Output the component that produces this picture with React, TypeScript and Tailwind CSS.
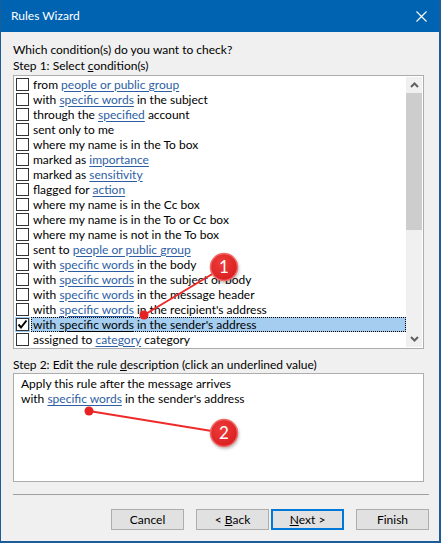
import React from "react"

type Part = [string, boolean]

const conditions: Part[][] = [
  [["from ", false], ["people or public group", true]],
  [["with ", false], ["specific words", true], [" in the subject", false]],
  [["through the ", false], ["specified", true], [" account", false]],
  [["sent only to me", false]],
  [["where my name is in the To box", false]],
  [["marked as ", false], ["importance", true]],
  [["marked as ", false], ["sensitivity", true]],
  [["flagged for ", false], ["action", true]],
  [["where my name is in the Cc box", false]],
  [["where my name is in the To or Cc box", false]],
  [["where my name is not in the To box", false]],
  [["sent to ", false], ["people or public group", true]],
  [["with ", false], ["specific words", true], [" in the body", false]],
  [["with ", false], ["specific words", true], [" in the subject or body", false]],
  [["with ", false], ["specific words", true], [" in the message header", false]],
  [["with ", false], ["specific words", true], [" in the recipient's address", false]],
  [["with ", false], ["specific words", true], [" in the sender's address", false]],
  [["assigned to ", false], ["category", true], [" category", false]],
]

const SELECTED = 16

function Checkbox({ checked }: { checked: boolean }) {
  return (
    <span
      className={
        "w-[13px] h-[13px] shrink-0 bg-white border border-[#333] flex items-center justify-center " +
        (checked ? "outline outline-1 outline-[#9cc7ee]" : "")
      }
    >
      {checked && (
        <svg width="11" height="11" viewBox="0 0 11 11">
          <polyline points="1.5,5.5 4,8.5 9.5,1.5" fill="none" stroke="#000" strokeWidth="2" />
        </svg>
      )}
    </span>
  )
}

function Row({ parts, selected }: { parts: Part[]; selected: boolean }) {
  return (
    <div className="h-[15px] flex items-center pl-[2px]">
      <Checkbox checked={selected} />
      <span
        className={
          "ml-[2px] pl-[2px] h-[15px] flex-1 flex items-center whitespace-pre " +
          (selected ? "bg-[#a5cdf0] outline outline-1 outline-dotted outline-black -outline-offset-1" : "")
        }
      >
        {parts.map(([text, link], i) =>
          link ? (
            <span key={i} className={"underline underline-offset-2 " + (selected ? "text-black" : "text-[#2d5ea3]")}>
              {text}
            </span>
          ) : (
            <span key={i}>{text}</span>
          )
        )}
      </span>
    </div>
  )
}

function Chevron({ up }: { up: boolean }) {
  return (
    <svg width="9" height="6" viewBox="0 0 9 6">
      <polyline
        points={up ? "1,5 4.5,1.5 8,5" : "1,1 4.5,4.5 8,1"}
        fill="none"
        stroke="#606060"
        strokeWidth="2"
      />
    </svg>
  )
}

function Button({ children, primary }: { children: React.ReactNode; primary?: boolean }) {
  return (
    <button
      className={
        "w-[73px] h-[21px] bg-[#e1e1e1] text-[12px] text-black flex items-center justify-center " +
        (primary ? "border-2 border-[#0078d7]" : "border border-[#adadad]")
      }
    >
      {children}
    </button>
  )
}

function Marker({ cx, cy, n }: { cx: number; cy: number; n: string }) {
  return (
    <g>
      <circle cx={cx + 1} cy={cy + 2} r="14" fill="rgba(0,0,0,0.25)" filter="url(#blur)" />
      <circle cx={cx} cy={cy} r="13.5" fill="url(#redFill)" stroke="#f26a6a" strokeWidth="1.5" />
      <text
        x={cx}
        y={cy + 6}
        textAnchor="middle"
        fontSize="17"
        fill="#fff"
        fontFamily="Lato, 'Liberation Sans', sans-serif"
      >
        {n}
      </text>
    </g>
  )
}

export default function App() {
  return (
    <div
      className="relative w-[441px] h-[543px] bg-[#f0f0f0] text-[12px] text-black flex flex-col border-l border-r-2 border-b-2 border-[#1c5c98] overflow-hidden"
      style={{ fontFamily: "Lato, 'Noto Sans', sans-serif" }}
    >
      {/* title bar */}
      <div className="h-[32px] -mx-[1px] bg-[#0063b1] flex items-center justify-between pl-[11px] pr-[13px] shrink-0">
        <span className="text-white text-[12px]">Rules Wizard</span>
        <svg width="11" height="11" viewBox="0 0 11 11">
          <path d="M0.5 0.5 L10.5 10.5 M10.5 0.5 L0.5 10.5" stroke="#fff" strokeWidth="1.1" />
        </svg>
      </div>

      <div className="flex flex-col px-[12px] pr-[15px]">
        <div className="mt-[10px] leading-[16px]">Which condition(s) do you want to check?</div>
        <div className="leading-[16px]">
          Step 1: Select <span className="underline">c</span>ondition(s)
        </div>

        {/* condition list */}
        <div className="mt-[1px] h-[274px] bg-white border border-[#adadad] flex">
          <div className="flex-1 py-[1px]">
            {conditions.map((parts, i) => (
              <Row key={i} parts={parts} selected={i === SELECTED} />
            ))}
          </div>
          <div className="w-[16px] my-[1px] mr-[1px] bg-[#f0f0f0] flex flex-col">
            <div className="h-[16px] flex items-center justify-center">
              <Chevron up />
            </div>
            <div className="h-[137px] bg-[#cdcdcd]" />
            <div className="flex-1" />
            <div className="h-[16px] flex items-center justify-center">
              <Chevron up={false} />
            </div>
          </div>
        </div>

        <div className="mt-[8px] leading-[16px]">
          Step 2: Edit the rule <span className="underline">d</span>escription (click an underlined value)
        </div>

        {/* rule description */}
        <div className="h-[109px] bg-white border border-[#adadad] pl-[7px] pt-[2px] leading-[15px]">
          <div>Apply this rule after the message arrives</div>
          <div>
            with <span className="text-[#2d5ea3] underline underline-offset-2">specific words</span> in the sender's
            address
          </div>
        </div>

        <div className="mt-[12px] h-px bg-[#a0a0a0] -mr-[5px]" />

        <div className="mt-[14px] flex justify-end gap-[12px] -mr-[5px]">
          <Button>Cancel</Button>
          <div className="flex gap-[2px]">
            <Button>
              &lt; <span className="underline ml-[3px]">B</span>ack
            </Button>
            <Button primary>
              <span className="underline">N</span>ext &gt;
            </Button>
          </div>
          <Button>Finish</Button>
        </div>
      </div>

      {/* callout annotations */}
      <svg className="absolute left-0 top-0 pointer-events-none" width="441" height="543">
        <defs>
          <radialGradient id="redFill" cx="0.4" cy="0.35" r="0.7">
            <stop offset="0" stopColor="#ef3b3b" />
            <stop offset="1" stopColor="#d81e1e" />
          </radialGradient>
          <filter id="blur">
            <feGaussianBlur stdDeviation="1.5" />
          </filter>
        </defs>
        <line x1="143" y1="315" x2="223" y2="267" stroke="#ee2b2b" strokeWidth="2" />
        <circle cx="143" cy="315" r="4.5" fill="#e62222" />
        <Marker cx={223} cy={267} n="1" />
        <line x1="88" y1="411" x2="223" y2="433" stroke="#ee2b2b" strokeWidth="2" />
        <circle cx="88" cy="411" r="4.5" fill="#e62222" />
        <Marker cx={223} cy={433} n="2" />
      </svg>
    </div>
  )
}
